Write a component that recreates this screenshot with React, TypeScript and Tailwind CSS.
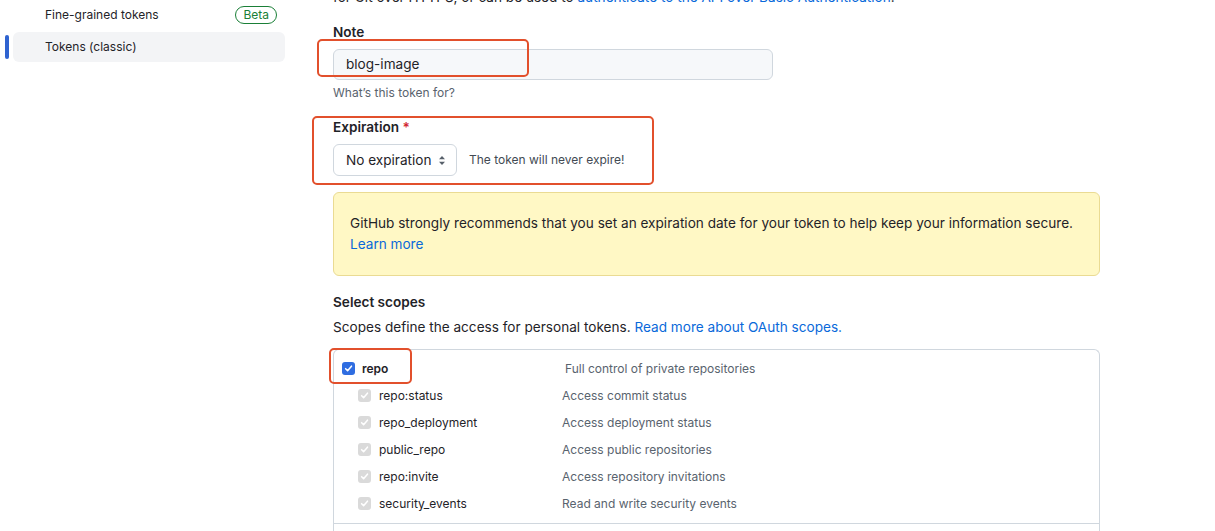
const scopes = [
  { name: 'repo:status', desc: 'Access commit status' },
  { name: 'repo_deployment', desc: 'Access deployment status' },
  { name: 'public_repo', desc: 'Access public repositories' },
  { name: 'repo:invite', desc: 'Access repository invitations' },
  { name: 'security_events', desc: 'Read and write security events' },
];

function Check({ disabled }: { disabled?: boolean }) {
  return (
    <span
      className={
        disabled
          ? 'flex h-[13px] w-[13px] shrink-0 items-center justify-center rounded-[3px] bg-[#dadada]'
          : 'flex h-[13px] w-[13px] shrink-0 items-center justify-center rounded-[3px] bg-[#2f6de1]'
      }
    >
      <svg width="9" height="9" viewBox="0 0 10 10" fill="none">
        <path d="M1.8 5.2 L4 7.4 L8.3 2.4" stroke="white" strokeWidth="1.7" strokeLinecap="round" strokeLinejoin="round" />
      </svg>
    </span>
  );
}

function Annotation({ className }: { className: string }) {
  return <div className={`pointer-events-none absolute rounded-[5px] border-[2.5px] border-[#e2502c] ${className}`} />;
}

export default function App() {
  return (
    <div
      className="relative flex h-[531px] w-[1215px] items-start overflow-hidden bg-white text-[#1f2328]"
      style={{ fontFamily: 'Inter, "Noto Sans", sans-serif' }}
    >
      {/* Sidebar */}
      <aside className="flex w-[285px] shrink-0 flex-col gap-[2px] pl-[13px] text-[12px]">
        <div className="flex h-[30px] items-center justify-between rounded-md pl-[32px] pr-[8px]">
          <span>Fine-grained tokens</span>
          <span className="flex h-[18px] items-center rounded-full border border-[#1a7f37] px-[7px] text-[12px] leading-none text-[#1a7f37]">
            Beta
          </span>
        </div>
        <div className="relative flex h-[30px] items-center rounded-md bg-[#f3f4f6] pl-[32px]">
          <span className="absolute left-[-8px] top-[3px] h-[24px] w-[4px] rounded-md bg-[#2f63d0]" />
          <span>Tokens (classic)</span>
        </div>
      </aside>

      {/* Main */}
      <main className="ml-[48px] block w-[767px] shrink-0 text-[13.6px]">
        <p className="-mt-[13px] whitespace-nowrap leading-[21px]">
          for Git over HTTPS, or can be used to{' '}
          <a className="text-[#0969da]">authenticate to the API over Basic Authentication</a>.
        </p>

        <label className="mt-[14px] mb-[6px] block font-semibold leading-[21px]">Note</label>
        <div className="flex h-[31px] w-[440px] items-center rounded-md border border-[#d0d7de] bg-[#f6f8fa] px-[12px]">
          blog-image
        </div>
        <p className="mt-[4px] text-[12px] leading-[18px] text-[#59636e]">What’s this token for?</p>

        <label className="mt-[15px] mb-[6px] block font-semibold leading-[21px]">
          Expiration <span className="text-[#d1242f]">*</span>
        </label>
        <div className="flex items-center gap-[12px]">
          <div className="flex h-[32px] w-[124px] items-center justify-between rounded-md border border-[#d0d7de] bg-white pl-[12px] pr-[10px]">
            <span>No expiration</span>
            <svg width="8" height="11" viewBox="0 0 8 11">
              <path d="M4 1 L7 4.3 H1 Z" fill="#57606a" />
              <path d="M4 10 L7 6.7 H1 Z" fill="#57606a" />
            </svg>
          </div>
          <span className="text-[12px] text-[#424a53]">The token will never expire!</span>
        </div>

        <div className="mt-4 rounded-md border border-[#eadb93] bg-[#fff8c5] px-[16px] py-[20px] leading-[21px]">
          <div className="whitespace-nowrap">
            GitHub strongly recommends that you set an expiration date for your token to help keep your information secure.
          </div>
          <a className="text-[#0969da]">Learn more</a>
        </div>

        <h3 className="mt-4 font-semibold leading-[21px]">Select scopes</h3>
        <p className="mt-1 leading-[21px]">
          Scopes define the access for personal tokens.{' '}
          <a className="text-[#0969da]">Read more about OAuth scopes.</a>
        </p>

        <div className="mt-[11px] rounded-t-md border border-b-0 border-[#d0d7de] text-[12px]">
          <div className="pt-[5px] pb-[6px]">
            <div className="flex h-[27px] items-center pl-[8px]">
              <div className="flex w-[223px] items-center gap-[7px]">
                <Check />
                <span className="font-semibold">repo</span>
              </div>
              <span className="text-[#59636e]">Full control of private repositories</span>
            </div>
            {scopes.map(s => (
              <div key={s.name} className="flex h-[27px] items-center pl-[24px]">
                <div className="flex w-[204px] items-center gap-[8px]">
                  <Check disabled />
                  <span>{s.name}</span>
                </div>
                <span className="text-[#59636e]">{s.desc}</span>
              </div>
            ))}
          </div>
          <div className="h-[40px] border-t border-[#d0d7de]" />
        </div>
      </main>

      {/* Annotations */}
      <Annotation className="left-[317px] top-[39px] h-[38px] w-[212px]" />
      <Annotation className="left-[312px] top-[116px] h-[69px] w-[342px]" />
      <Annotation className="left-[329px] top-[348px] h-[36px] w-[83px]" />
    </div>
  );
}
